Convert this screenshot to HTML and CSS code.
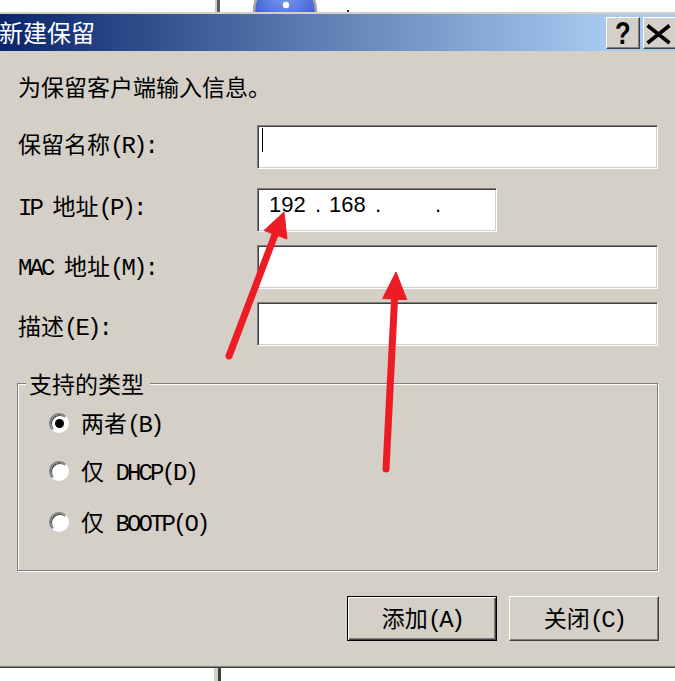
FILE: index.html
```html
<!DOCTYPE html>
<html lang="zh-CN">
<head>
<meta charset="utf-8">
<title>新建保留</title>
<link rel="stylesheet" href="styles.css">
</head>
<body>
<div class="bgwin top">
  <svg class="bgsvg" width="675" height="12" viewBox="0 0 675 12">
    <defs>
      <radialGradient id="g1" cx="0.5" cy="0.2" r="0.7">
        <stop offset="0" stop-color="#7f9cf0"/>
        <stop offset="1" stop-color="#3457cf"/>
      </radialGradient>
    </defs>
    <rect x="215" y="0" width="2" height="12" fill="#d0ccc4"/>
    <rect x="217" y="0" width="3" height="12" fill="#5e5e5e"/>
    <circle cx="285" cy="11" r="31" fill="url(#g1)" stroke="#a8a8a8" stroke-width="2.5"/>
    <circle cx="286" cy="5" r="3.2" fill="#ffffff"/>
    <rect x="347" y="10" width="2" height="2" fill="#333"/>
  </svg>
</div>

<div class="dialog">
  <div class="titlebar">
    <span class="title">新建保留</span>
    <div class="caption-btns">
      <span class="cbtn help"><span class="q">?</span></span>
      <span class="cbtn close">
        <svg width="32" height="30" viewBox="0 0 32 30">
          <path d="M3.5 7.5 L25.5 25 M25.5 7.5 L3.5 25" stroke="#000" stroke-width="3.6" fill="none"/>
        </svg>
      </span>
    </div>
  </div>

  <div class="content">
    <p class="intro">为保留客户端输入信息。</p>

    <div class="form">
      <div class="row r1">
        <label class="lab l1">保留名称<span class="h">(R):</span></label>
        <div class="field wide"><span class="caret"></span></div>
      </div>
      <div class="row r2">
        <label class="lab l2"><span class="h">IP </span>地址<span class="h">(P):</span></label>
        <div class="field ipf">
          <span class="seg">192</span><span class="dot">.</span><span class="seg">168</span><span class="dot">.</span><span class="seg"></span><span class="dot">.</span><span class="seg"></span>
        </div>
      </div>
      <div class="row r3">
        <label class="lab l3"><span class="h">MAC </span>地址<span class="h">(M):</span></label>
        <div class="field wide"></div>
      </div>
      <div class="row r4">
        <label class="lab l4">描述<span class="h">(E):</span></label>
        <div class="field wide"></div>
      </div>
    </div>

    <fieldset class="group">
      <legend class="legend">支持的类型</legend>
      <div class="radios">
        <div class="radio-row"><span class="radio checked"></span><span class="rlabel">两者<span class="h">(B)</span></span></div>
        <div class="radio-row rr2"><span class="radio"></span><span class="rlabel">仅<span class="h"> DHCP(D)</span></span></div>
        <div class="radio-row rr3"><span class="radio"></span><span class="rlabel">仅<span class="h"> BOOTP(O)</span></span></div>
      </div>
    </fieldset>

    <div class="actions">
      <button class="btn default">添加<span class="h">(A)</span></button>
      <button class="btn">关闭<span class="h">(C)</span></button>
    </div>
  </div>
</div>

<div class="bgwin bottom">
  <svg class="bgsvg" width="675" height="13" viewBox="0 0 675 13">
    <rect x="214" y="0" width="4" height="13" fill="#d4d0c8"/>
    <rect x="218" y="0" width="3" height="13" fill="#404040"/>
  </svg>
</div>

<svg class="arrows" width="675" height="681" viewBox="0 0 675 681">
  <g fill="#ed1c24" stroke="#ed1c24">
    <line x1="229" y1="356" x2="276" y2="232" stroke-width="7" stroke-linecap="round"/>
    <polygon points="284,212 264,230.5 287,239" stroke-width="1" stroke-linejoin="round"/>
    <line x1="386" y1="469" x2="394.7" y2="296" stroke-width="7" stroke-linecap="round"/>
    <polygon points="396,272 382.6,298.5 406.8,299.7" stroke-width="1" stroke-linejoin="round"/>
  </g>
</svg>
</body>
</html>
```

FILE: styles.css
```css
html, body {
  margin: 0;
  padding: 0;
}
body {
  width: 675px;
  height: 681px;
  overflow: hidden;
  background: #ffffff;
  font-family: "Noto Sans CJK SC", sans-serif;
  color: #000;
  position: relative;
}

.bgwin {
  background: #ffffff;
  overflow: hidden;
}
.bgwin.top { height: 12px; }
.bgwin.bottom { height: 13px; }
.bgsvg { display: block; }

.dialog {
  background: #d4d0c8;
  border-top: 2px solid #d4d0c8;
  border-bottom: 1px solid #404040;
}

/* title bar */
.titlebar {
  height: 37px;
  display: flex;
  justify-content: space-between;
  align-items: flex-start;
  background: linear-gradient(90deg, #0a246a 0%, #5a7bb0 45%, #a6caf0 90%, #a6caf0 100%);
}
.title {
  color: #ffffff;
  font-size: 24px;
  line-height: 35px;
  margin-left: -1px;
}
.caption-btns {
  display: flex;
  gap: 3px;
  margin-top: 3px;
  margin-right: -2px;
}
.cbtn {
  box-sizing: border-box;
  width: 34px;
  height: 32px;
  background: #d4d0c8;
  border: 1px solid;
  border-color: #ffffff #404040 #404040 #ffffff;
  box-shadow: inset -1px -1px #808080;
  display: flex;
  align-items: center;
  justify-content: center;
}
.cbtn.close {
  align-items: flex-start;
  justify-content: flex-start;
  overflow: hidden;
}
.cbtn.close svg { display: block; }
.q {
  font-family: "Liberation Sans", sans-serif;
  font-weight: bold;
  font-size: 32px;
  line-height: 28px;
  transform: scaleX(0.8);
  display: inline-block;
}

/* content */
.content {
  padding: 0 17px 25px 17px;
  border-bottom: 1px solid #808080;
}
.intro {
  margin: 20px 0 0 1px;
  font-size: 23px;
  line-height: 30px;
}
.h {
  font-family: "Liberation Mono", monospace;
  font-size: 24px;
  letter-spacing: -2.9px;
}

.form {
  margin-top: 24px;
  display: flex;
  flex-direction: column;
  gap: 13px;
}
.row {
  display: flex;
  align-items: center;
  height: 44px;
}
.row.r1 { margin-bottom: 6px; }
.lab {
  box-sizing: border-box;
  width: 240px;
  padding-left: 1px;
  font-size: 23px;
  line-height: 30px;
  white-space: pre;
}
.l1 { margin-bottom: 4px; }
.l2 { margin-bottom: 6px; }
.l4 { margin-top: 6px; }

.field {
  box-sizing: border-box;
  height: 44px;
  background: #ffffff;
  border: 1px solid;
  border-color: #808080 #ffffff #ffffff #808080;
  box-shadow: inset 1px 1px #404040, inset -1px -1px #d4d0c8;
  display: flex;
  align-items: flex-start;
}
.wide { width: 401px; }
.ipf {
  width: 240px;
  padding: 3px 0 0 11px;
  font-family: "Liberation Sans", sans-serif;
  font-size: 22px;
  line-height: 26px;
}
.caret {
  width: 1px;
  height: 24px;
  background: #000;
  margin: 2px 0 0 4px;
}
.seg {
  display: inline-block;
  width: 46px;
  white-space: pre;
}
.dot {
  display: inline-block;
  width: 14px;
}

/* group box */
.group {
  box-sizing: border-box;
  width: 641px;
  min-width: 0;
  margin: 24px 0 0 0;
  padding: 13px 0 32px 8px;
  border: 1px solid #808080;
  box-shadow: inset 1px 1px #ffffff, 1px 1px #ffffff;
}
.legend {
  padding: 0 6px 0 3px;
  font-size: 23px;
  line-height: 26px;
  background: #d4d0c8;
}
.radios {
  display: flex;
  flex-direction: column;
  padding-left: 23px;
}
.radio-row {
  display: flex;
  align-items: center;
  height: 30px;
}
.rr2 { margin-top: 18px; }
.rr3 { margin-top: 21px; }
.radio {
  box-sizing: border-box;
  width: 20px;
  height: 20px;
  border-radius: 50%;
  background: #ffffff;
  border: 2px solid;
  border-color: #808080 #ffffff #ffffff #808080;
  box-shadow: inset 1px 1px #404040;
  display: flex;
  align-items: center;
  justify-content: center;
  margin-top: -2px;
}
.radio.checked::after {
  content: "";
  width: 9px;
  height: 9px;
  border-radius: 50%;
  background: #000;
}
.rlabel {
  margin-left: 12px;
  font-size: 23px;
  line-height: 30px;
  white-space: pre;
}

/* buttons */
.actions {
  margin-top: 25px;
  margin-right: -1px;
  display: flex;
  justify-content: flex-end;
  gap: 12px;
}
.btn {
  box-sizing: border-box;
  width: 150px;
  height: 45px;
  padding: 0;
  background: #d4d0c8;
  color: #000;
  font-family: "Noto Sans CJK SC", sans-serif;
  font-size: 23px;
  line-height: 30px;
  border: 1px solid;
  border-color: #ffffff #404040 #404040 #ffffff;
  box-shadow: inset -1px -1px #808080;
}
.btn.default {
  border-color: #000;
  box-shadow: inset 1px 1px #ffffff, inset -1px -1px #404040, inset -2px -2px #808080;
}

/* annotation overlay */
.arrows {
  position: absolute;
  left: 0;
  top: 0;
  pointer-events: none;
}
```
